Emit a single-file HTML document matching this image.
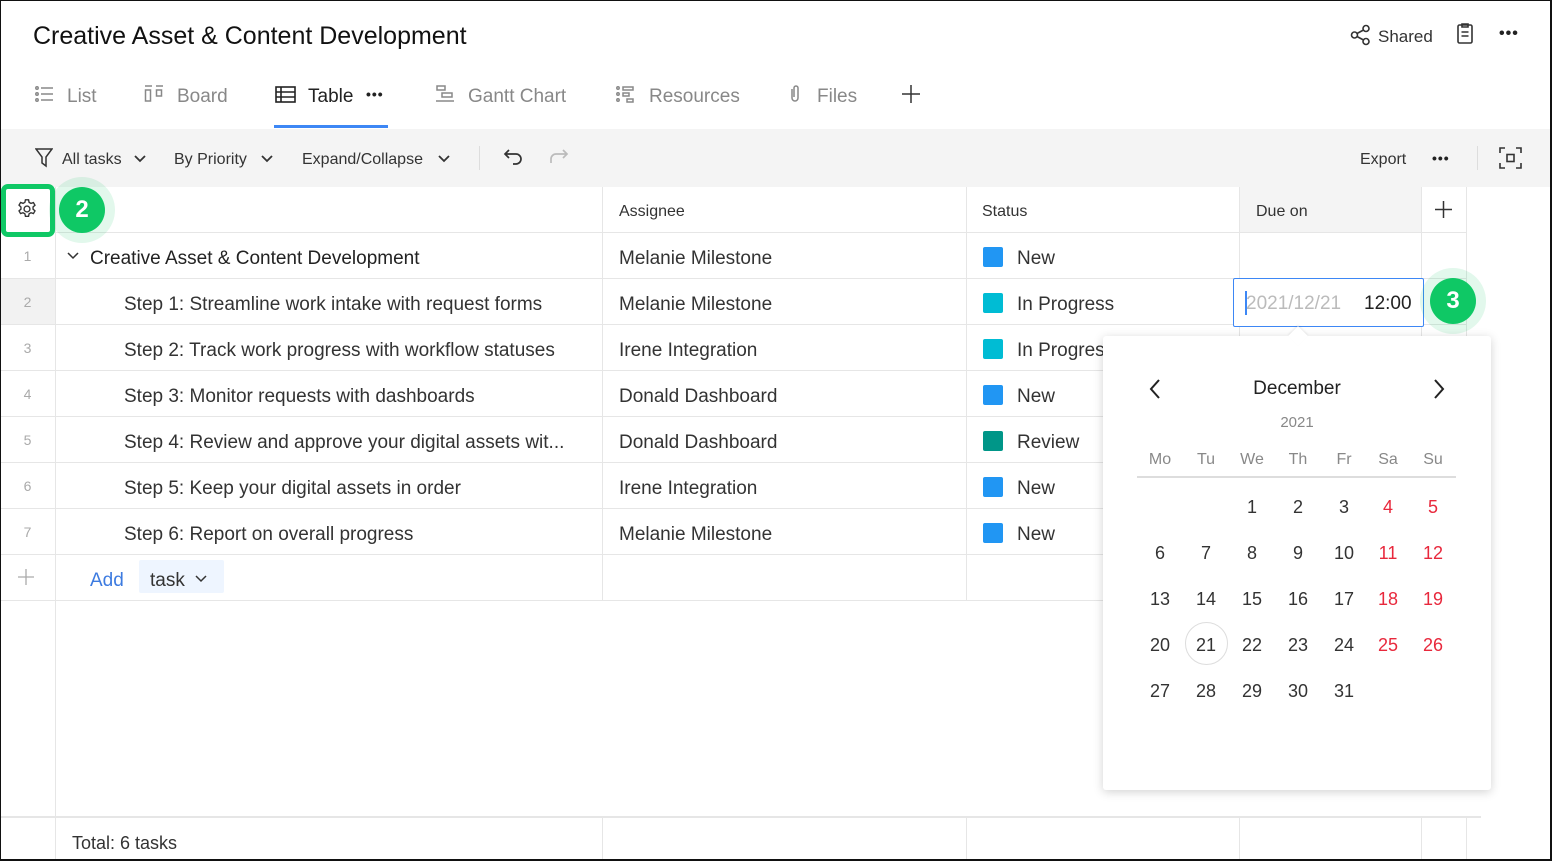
<!DOCTYPE html>
<html><head><meta charset="utf-8"><style>
*{box-sizing:border-box;margin:0;padding:0}
body{width:1552px;height:861px;overflow:hidden;background:#fff;font-family:"Liberation Sans",sans-serif;color:#222;position:relative}
.frame{position:absolute;left:0;top:0;width:1552px;height:861px;border:1px solid #111;border-right-width:2px;border-bottom-width:2px;pointer-events:none;z-index:50}
.a{position:absolute;white-space:nowrap}
.tab{position:absolute;top:86px;font-size:19px;color:#888}
.tb{position:absolute;top:151px;font-size:16px;color:#333}
.vl{position:absolute;width:1px;background:#e6e6e6}
.hl{position:absolute;height:1px;background:#e6e6e6}
.num{position:absolute;left:0;width:55px;text-align:center;font-size:14px;color:#aaa}
.t{position:absolute;left:124px;font-size:19px;color:#333}
.as{position:absolute;left:619px;font-size:19px;color:#333}
.st{position:absolute;left:983px;font-size:19px;color:#333}
.sq{display:inline-block;width:20px;height:20px;border-radius:2px;vertical-align:-3px;margin-right:14px}
.cal{position:absolute;left:1103px;top:336px;width:388px;height:454px;background:#fff;box-shadow:0 2px 10px rgba(0,0,0,.18);border-radius:3px;z-index:10}
.d{position:absolute;width:46px;text-align:center;font-size:18px;color:#333}
.r{color:#e8283c}
.badge{position:absolute;width:46px;height:46px;border-radius:50%;background:#0fc865;color:#fff;font-weight:bold;font-size:24px;text-align:center;line-height:46px;box-shadow:0 0 0 10px rgba(15,200,101,.12)}
.dots{position:absolute;font-size:14px;font-weight:bold;letter-spacing:1px}
</style></head><body>
<div class="frame"></div>
<div class="a" style="left:33px;top:22px;font-size:25px;color:#111">Creative Asset &amp; Content Development</div>
<svg class="a" style="left:1350px;top:24px" width="22" height="22" viewBox="0 0 22 22" fill="none" stroke="#333" stroke-width="1.6"><circle cx="4.5" cy="11" r="3"/><circle cx="16" cy="4.5" r="3"/><circle cx="16" cy="17.5" r="3"/><path d="M7 9.5L13.5 6M7 12.5l6.5 3.5"/></svg>
<div class="a" style="left:1378px;top:27px;font-size:17px;color:#333">Shared</div>
<svg class="a" style="left:1455px;top:22px" width="20" height="24" viewBox="0 0 20 24" fill="none" stroke="#333" stroke-width="1.6"><rect x="3" y="3" width="14" height="18" rx="1.5"/><path d="M7 2h6v3H7zM6.5 10h7M6.5 14h7"/></svg>
<div class="dots" style="left:1499px;top:25px;font-size:16px;color:#222">•••</div>
<svg class="a" style="left:35px;top:86px" width="20" height="16" viewBox="0 0 20 16" fill="none" stroke="#888" stroke-width="1.5"><circle cx="2" cy="2" r="1.2"/><circle cx="2" cy="8" r="1.2"/><circle cx="2" cy="14" r="1.2"/><path d="M6 2h12M6 8h12M6 14h12"/></svg>
<div class="tab" style="left:67px">List</div>
<svg class="a" style="left:144px;top:85px" width="20" height="18" viewBox="0 0 20 18" fill="none" stroke="#888" stroke-width="1.5"><path d="M1 1h7M12 1h7"/><rect x="1.5" y="5" width="5" height="11"/><rect x="12.5" y="5" width="5" height="6"/></svg>
<div class="tab" style="left:177px">Board</div>
<svg class="a" style="left:275px;top:86px" width="22" height="17" viewBox="0 0 22 17" fill="none" stroke="#222" stroke-width="1.6"><rect x="1" y="1" width="19" height="15"/><path d="M1 6h19M1 11h19M6 1v15"/></svg>
<div class="tab" style="left:308px;color:#222">Table</div>
<div class="dots" style="left:366px;top:86px;color:#222">•••</div>
<div class="a" style="left:274px;top:125px;width:114px;height:3px;background:#3d87f5"></div>
<svg class="a" style="left:435px;top:85px" width="20" height="18" viewBox="0 0 20 18" fill="none" stroke="#888" stroke-width="1.5"><rect x="2" y="1" width="8" height="4"/><rect x="7" y="8" width="10" height="4"/><path d="M1 16h18"/></svg>
<div class="tab" style="left:468px">Gantt Chart</div>
<svg class="a" style="left:616px;top:86px" width="20" height="17" viewBox="0 0 20 17" fill="none" stroke="#888" stroke-width="1.5"><circle cx="2" cy="2" r="1.2"/><circle cx="2" cy="8" r="1.2"/><circle cx="2" cy="14" r="1.2"/><rect x="7" y="1" width="10" height="3"/><rect x="7" y="7" width="6" height="3"/><rect x="11" y="13" width="6" height="3"/></svg>
<div class="tab" style="left:649px">Resources</div>
<svg class="a" style="left:788px;top:84px" width="14" height="20" viewBox="0 0 14 20" fill="none" stroke="#888" stroke-width="1.5"><path d="M4 5v9a3 3 0 006 0V4a2 2 0 00-4 0v9"/></svg>
<div class="tab" style="left:817px">Files</div>
<svg class="a" style="left:902px;top:85px" width="18" height="18" viewBox="0 0 18 18" stroke="#333" stroke-width="1.5"><path d="M9 0v18M0 9h18"/></svg>
<div class="a" style="left:1px;top:129px;width:1549px;height:58px;background:#f4f4f4"></div>
<svg class="a" style="left:35px;top:148px" width="18" height="20" viewBox="0 0 18 20" fill="none" stroke="#333" stroke-width="1.5"><path d="M1 1h16l-6 8v9l-4-3V9z"/></svg>
<div class="tb" style="left:62px">All tasks</div>
<svg class="a" style="left:134px;top:155px" width="12" height="8" viewBox="0 0 12 8" fill="none" stroke="#333" stroke-width="1.8"><path d="M1 1l5 5 5-5"/></svg>
<div class="tb" style="left:174px">By Priority</div>
<svg class="a" style="left:261px;top:155px" width="12" height="8" viewBox="0 0 12 8" fill="none" stroke="#333" stroke-width="1.8"><path d="M1 1l5 5 5-5"/></svg>
<div class="tb" style="left:302px">Expand/Collapse</div>
<svg class="a" style="left:438px;top:155px" width="12" height="8" viewBox="0 0 12 8" fill="none" stroke="#333" stroke-width="1.8"><path d="M1 1l5 5 5-5"/></svg>
<div class="a" style="left:479px;top:146px;width:1px;height:24px;background:#ddd"></div>
<svg class="a" style="left:503px;top:148px" width="22" height="18" viewBox="0 0 22 18" fill="none" stroke="#333" stroke-width="1.7"><path d="M6 2L2 6l4 4M2 6h11a5 5 0 010 10h-3"/></svg>
<svg class="a" style="left:547px;top:148px" width="22" height="18" viewBox="0 0 22 18" fill="none" stroke="#bbb" stroke-width="1.7"><path d="M16 2l4 4-4 4M20 6H9a5 5 0 00-5 5v4"/></svg>
<div class="tb" style="left:1360px">Export</div>
<div class="dots" style="left:1432px;top:150px;color:#222">•••</div>
<div class="a" style="left:1477px;top:146px;width:1px;height:24px;background:#ddd"></div>
<svg class="a" style="left:1499px;top:147px" width="23" height="22" viewBox="0 0 23 22" fill="none" stroke="#333" stroke-width="1.6"><path d="M1 6V1h5M17 1h5v5M22 16v5h-5M6 21H1v-5"/><rect x="8" y="7.5" width="7" height="7"/></svg>
<div class="hl" style="left:1px;top:232px;width:1466px"></div>
<div class="vl" style="left:55px;top:187px;height:674px"></div>
<div class="vl" style="left:602px;top:187px;height:414px"></div>
<div class="vl" style="left:966px;top:187px;height:414px"></div>
<div class="vl" style="left:1239px;top:187px;height:414px"></div>
<div class="vl" style="left:1421px;top:187px;height:414px"></div>
<div class="vl" style="left:1466px;top:187px;height:414px"></div>
<div class="a" style="left:1240px;top:187px;width:181px;height:45px;background:#f4f4f4"></div>
<div class="a" style="left:1px;top:279px;width:54px;height:46px;background:#f2f2f2"></div>
<div class="hl" style="left:1px;top:278px;width:1466px"></div>
<div class="hl" style="left:1px;top:324px;width:1466px"></div>
<div class="hl" style="left:1px;top:370px;width:1466px"></div>
<div class="hl" style="left:1px;top:416px;width:1466px"></div>
<div class="hl" style="left:1px;top:462px;width:1466px"></div>
<div class="hl" style="left:1px;top:508px;width:1466px"></div>
<div class="hl" style="left:1px;top:554px;width:1466px"></div>
<div class="hl" style="left:1px;top:600px;width:1466px"></div>
<div class="hl" style="left:1px;top:816px;width:1480px;height:2px"></div>
<div class="vl" style="left:602px;top:818px;height:43px"></div>
<div class="vl" style="left:966px;top:818px;height:43px"></div>
<div class="vl" style="left:1239px;top:818px;height:43px"></div>
<div class="vl" style="left:1421px;top:818px;height:43px"></div>
<div class="vl" style="left:1466px;top:818px;height:43px"></div>
<div class="a" style="left:1px;top:184px;width:54px;height:53px;border:5px solid #0fc865;border-radius:7px;background:#fff"></div>
<svg class="a" style="left:16px;top:198px" width="22" height="22" viewBox="0 0 24 24" fill="none" stroke="#333" stroke-width="1.5"><circle cx="12" cy="12" r="3.2"/><path d="M10.3 2h3.4l.6 2.8 2 1.1 2.7-.9 1.7 2.9-2.1 1.9v2.4l2.1 1.9-1.7 2.9-2.7-.9-2 1.1-.6 2.8h-3.4l-.6-2.8-2-1.1-2.7.9-1.7-2.9 2.1-1.9v-2.4L3.3 7.8 5 4.9l2.7.9 2-1.1z"/></svg>
<div class="badge" style="left:59px;top:187px">2</div>
<div class="a" style="left:619px;top:203px;font-size:16px;color:#333">Assignee</div>
<div class="a" style="left:982px;top:203px;font-size:16px;color:#333">Status</div>
<div class="a" style="left:1256px;top:203px;font-size:16px;color:#333">Due on</div>
<svg class="a" style="left:1435px;top:201px" width="17" height="17" viewBox="0 0 17 17" stroke="#333" stroke-width="1.5"><path d="M8.5 0v17M0 8.5h17"/></svg>
<div class="num" style="top:248px">1</div>
<div class="num" style="top:294px">2</div>
<div class="num" style="top:340px">3</div>
<div class="num" style="top:386px">4</div>
<div class="num" style="top:432px">5</div>
<div class="num" style="top:478px">6</div>
<div class="num" style="top:524px">7</div>
<svg class="a" style="left:18px;top:569px" width="16" height="16" viewBox="0 0 16 16" stroke="#aaa" stroke-width="1.3"><path d="M8 0v16M0 8h16"/></svg>
<svg class="a" style="left:67px;top:252px" width="12" height="8" viewBox="0 0 12 8" fill="none" stroke="#333" stroke-width="1.5"><path d="M1 1l5 5 5-5"/></svg>
<div class="a" style="left:90px;top:248px;font-size:19px;color:#222">Creative Asset &amp; Content Development</div>
<div class="t" style="top:294px">Step 1: Streamline work intake with request forms</div>
<div class="t" style="top:340px">Step 2: Track work progress with workflow statuses</div>
<div class="t" style="top:386px">Step 3: Monitor requests with dashboards</div>
<div class="t" style="top:432px">Step 4: Review and approve your digital assets wit...</div>
<div class="t" style="top:478px">Step 5: Keep your digital assets in order</div>
<div class="t" style="top:524px">Step 6: Report on overall progress</div>
<div class="a" style="left:90px;top:570px;font-size:19px;color:#3d7be0">Add</div>
<div class="a" style="left:139px;top:560px;width:85px;height:33px;background:#eef5ff;border-radius:2px"></div>
<div class="a" style="left:150px;top:570px;font-size:19px;color:#333">task</div>
<svg class="a" style="left:195px;top:575px" width="12" height="8" viewBox="0 0 12 8" fill="none" stroke="#333" stroke-width="1.5"><path d="M1 1l5 5 5-5"/></svg>
<div class="as" style="top:248px">Melanie Milestone</div>
<div class="as" style="top:294px">Melanie Milestone</div>
<div class="as" style="top:340px">Irene Integration</div>
<div class="as" style="top:386px">Donald Dashboard</div>
<div class="as" style="top:432px">Donald Dashboard</div>
<div class="as" style="top:478px">Irene Integration</div>
<div class="as" style="top:524px">Melanie Milestone</div>
<div class="st" style="top:247px"><span class="sq" style="background:#2196f3"></span>New</div>
<div class="st" style="top:293px"><span class="sq" style="background:#00bcd4"></span>In Progress</div>
<div class="st" style="top:339px"><span class="sq" style="background:#00bcd4"></span>In Progress</div>
<div class="st" style="top:385px"><span class="sq" style="background:#2196f3"></span>New</div>
<div class="st" style="top:431px"><span class="sq" style="background:#009688"></span>Review</div>
<div class="st" style="top:477px"><span class="sq" style="background:#2196f3"></span>New</div>
<div class="st" style="top:523px"><span class="sq" style="background:#2196f3"></span>New</div>
<div class="a" style="left:72px;top:833px;font-size:18px;color:#333">Total: 6 tasks</div>
<div class="a" style="left:1233px;top:278px;width:191px;height:49px;border:1px solid #3d87f5;border-radius:2px;background:#fff;z-index:11"></div>
<div class="a" style="left:1245px;top:291px;width:2px;height:24px;background:#3d87f5;z-index:12"></div>
<div class="a" style="left:1246px;top:293px;font-size:19px;color:#bbb;z-index:12">2021/12/21</div>
<div class="a" style="left:1364px;top:293px;font-size:19px;color:#222;z-index:12">12:00</div>
<div class="badge" style="left:1430px;top:278px;z-index:12">3</div>
<div class="cal">
<svg class="a" style="left:45px;top:42px" width="14" height="22" viewBox="0 0 14 22" fill="none" stroke="#222" stroke-width="2"><path d="M11 2L3 11l8 9"/></svg>
<svg class="a" style="left:329px;top:42px" width="14" height="22" viewBox="0 0 14 22" fill="none" stroke="#222" stroke-width="2"><path d="M3 2l8 9-8 9"/></svg>
<div class="a" style="left:0;width:388px;text-align:center;top:42px;font-size:19px;color:#222">December</div>
<div class="a" style="left:0;width:388px;text-align:center;top:78px;font-size:15px;color:#888">2021</div>
<div class="d" style="left:34px;top:115px;font-size:16px;color:#888">Mo</div>
<div class="d" style="left:80px;top:115px;font-size:16px;color:#888">Tu</div>
<div class="d" style="left:126px;top:115px;font-size:16px;color:#888">We</div>
<div class="d" style="left:172px;top:115px;font-size:16px;color:#888">Th</div>
<div class="d" style="left:218px;top:115px;font-size:16px;color:#888">Fr</div>
<div class="d" style="left:262px;top:115px;font-size:16px;color:#888">Sa</div>
<div class="d" style="left:307px;top:115px;font-size:16px;color:#888">Su</div>
<div class="a" style="left:34px;top:140px;width:319px;height:2px;background:#ddd"></div>
<div class="a" style="left:82px;top:286px;width:43px;height:43px;border:1px solid #ddd;border-radius:50%"></div>
<div class="d" style="left:126px;top:161px">1</div><div class="d" style="left:172px;top:161px">2</div><div class="d" style="left:218px;top:161px">3</div><div class="d r" style="left:262px;top:161px">4</div><div class="d r" style="left:307px;top:161px">5</div>
<div class="d" style="left:34px;top:207px">6</div><div class="d" style="left:80px;top:207px">7</div><div class="d" style="left:126px;top:207px">8</div><div class="d" style="left:172px;top:207px">9</div><div class="d" style="left:218px;top:207px">10</div><div class="d r" style="left:262px;top:207px">11</div><div class="d r" style="left:307px;top:207px">12</div>
<div class="d" style="left:34px;top:253px">13</div><div class="d" style="left:80px;top:253px">14</div><div class="d" style="left:126px;top:253px">15</div><div class="d" style="left:172px;top:253px">16</div><div class="d" style="left:218px;top:253px">17</div><div class="d r" style="left:262px;top:253px">18</div><div class="d r" style="left:307px;top:253px">19</div>
<div class="d" style="left:34px;top:299px">20</div><div class="d" style="left:80px;top:299px">21</div><div class="d" style="left:126px;top:299px">22</div><div class="d" style="left:172px;top:299px">23</div><div class="d" style="left:218px;top:299px">24</div><div class="d r" style="left:262px;top:299px">25</div><div class="d r" style="left:307px;top:299px">26</div>
<div class="d" style="left:34px;top:345px">27</div><div class="d" style="left:80px;top:345px">28</div><div class="d" style="left:126px;top:345px">29</div><div class="d" style="left:172px;top:345px">30</div><div class="d" style="left:218px;top:345px">31</div>
</div>
<div class="a" style="left:1291px;top:329px;width:14px;height:14px;background:#fff;transform:rotate(45deg);box-shadow:-1px -1px 2px rgba(0,0,0,.08);z-index:11"></div>
</body></html>
